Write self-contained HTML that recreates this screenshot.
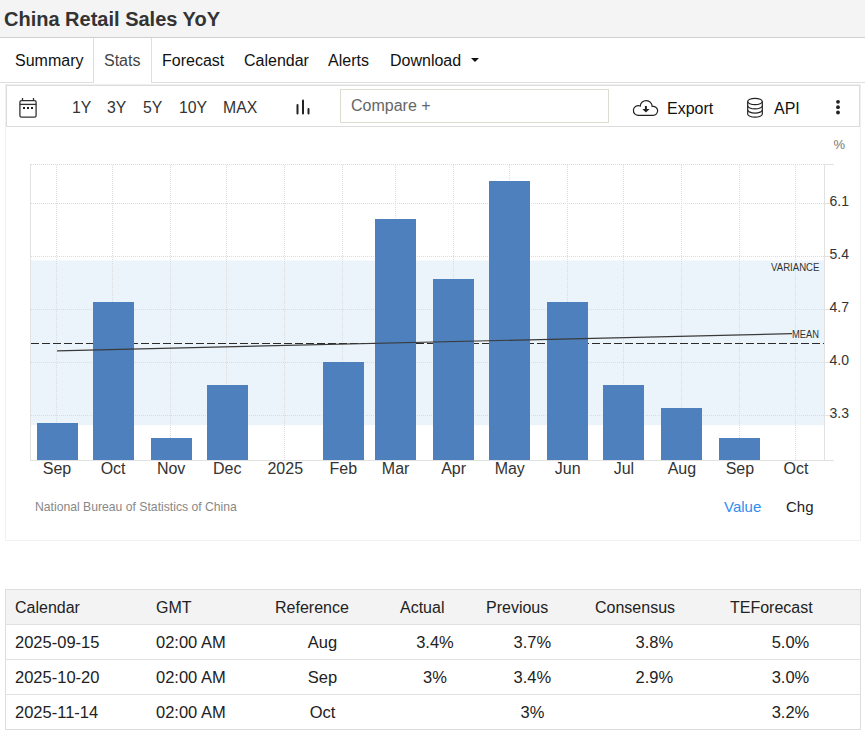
<!DOCTYPE html>
<html><head><meta charset="utf-8">
<style>
*{margin:0;padding:0;box-sizing:border-box}
html,body{width:865px;height:730px;overflow:hidden;background:#fff;font-family:"Liberation Sans",sans-serif;color:#222}
.abs{position:absolute;white-space:nowrap}
#hdr{position:absolute;left:0;top:0;width:865px;height:38px;background:#f4f4f4;border-bottom:1px solid #cfcfcf}
#title{left:4px;top:8px;font-size:20px;font-weight:bold;color:#333}
.tab{font-size:16px;top:52px;color:#111}
.line{position:absolute;background:#dedede}
.tb{font-size:15.8px;top:98.5px;color:#333}
svg text{font-family:"Liberation Sans",sans-serif}
.th{font-size:16px;color:#222}
.td{font-size:16.5px;color:#222}
</style></head><body>
<div id="hdr"></div>
<div class="abs" id="title">China Retail Sales YoY</div>
<!-- tabs -->
<div class="line" style="left:0;top:82px;width:94px;height:1px"></div>
<div class="line" style="left:151px;top:82px;width:714px;height:1px"></div>
<div class="line" style="left:93px;top:38px;width:1px;height:45px"></div>
<div class="line" style="left:151px;top:38px;width:1px;height:45px"></div>
<div class="abs tab" style="left:15px">Summary</div>
<div class="abs tab" style="left:104px;color:#444">Stats</div>
<div class="abs tab" style="left:162px">Forecast</div>
<div class="abs tab" style="left:244px">Calendar</div>
<div class="abs tab" style="left:328px">Alerts</div>
<div class="abs tab" style="left:390px">Download</div>
<div class="abs" style="left:471px;top:58px;width:0;height:0;border-left:4px solid transparent;border-right:4px solid transparent;border-top:4px solid #111"></div>
<!-- chart container -->
<div class="abs" style="left:5px;top:84px;width:856px;height:457px;border:1px solid #f0f0f0"></div>
<div class="abs" style="left:6px;top:85px;width:854px;height:42px;border:1px solid #dcdcdc"></div>
<svg class="abs" style="left:0;top:0" width="865" height="130" viewBox="0 0 865 130">
  <g fill="none" stroke="#333" stroke-width="1.3">
    <rect x="19.9" y="100.6" width="16.2" height="16.5" rx="1.6"/>
    <line x1="19.9" y1="104.4" x2="36.1" y2="104.4"/>
    <line x1="22.5" y1="98" x2="22.5" y2="100.2"/>
    <line x1="33.5" y1="98" x2="33.5" y2="100.2"/>
  </g>
  <g fill="#222"><rect x="23" y="107" width="2" height="2"/><rect x="27" y="107" width="2" height="2"/><rect x="31" y="107" width="2" height="2"/></g>
  <g stroke="#222" stroke-width="2" stroke-linecap="round">
    <line x1="297.5" y1="105" x2="297.5" y2="113.5"/>
    <line x1="303" y1="100.5" x2="303" y2="113.5"/>
    <line x1="308.5" y1="109" x2="308.5" y2="113.5"/>
  </g>
</svg>
<div class="abs tb" style="left:72px">1Y</div>
<div class="abs tb" style="left:107px">3Y</div>
<div class="abs tb" style="left:143px">5Y</div>
<div class="abs tb" style="left:179px">10Y</div>
<div class="abs tb" style="left:223px">MAX</div>
<div class="abs" style="left:340px;top:89px;width:269px;height:34px;border:1px solid #dcdcd0"></div>
<div class="abs" style="left:351px;top:97px;font-size:16px;color:#666">Compare +</div>
<svg class="abs" style="left:0;top:0" width="865" height="130" viewBox="0 0 865 130">
  <path d="M639.3,115.3 H653.1 A4.5,4.5 0 1 0 652.2,106.4 A6,6 0 0 0 640.23,106.0 A4.9,4.9 0 1 0 639.3,115.3 Z" fill="none" stroke="#222" stroke-width="1.2"/>
  <path d="M645.9,106 v4" stroke="#222" stroke-width="2"/>
  <path d="M642.3,109 h7.3 l-3.65,3.5z" fill="#222"/>
  <g fill="none" stroke="#222" stroke-width="1.2">
    <ellipse cx="755" cy="101.5" rx="7.3" ry="3.2"/>
    <path d="M747.7,101.5 V114 M762.3,101.5 V114"/>
    <path d="M747.7,105.7 A7.3,3.2 0 0 0 762.3,105.7"/>
    <path d="M747.7,109.9 A7.3,3.2 0 0 0 762.3,109.9"/>
    <path d="M747.7,114 A7.3,3.2 0 0 0 762.3,114"/>
  </g>
  <g fill="#222"><circle cx="838" cy="101.8" r="1.9"/><circle cx="838" cy="107.2" r="1.9"/><circle cx="838" cy="112.5" r="1.9"/></g>
</svg>
<div class="abs tb" style="left:667px;top:100px;font-size:16px;color:#111">Export</div>
<div class="abs tb" style="left:774px;top:100px;font-size:16px;color:#111">API</div>
<!-- chart -->
<svg class="abs" style="left:0;top:0" width="865" height="545" viewBox="0 0 865 545">
<rect x="31" y="260.5" width="793" height="164.7" fill="#ecf4fb"/>
<line x1="31" y1="164.5" x2="824" y2="164.5" stroke="#dcdcdc" stroke-width="1" stroke-dasharray="1,1"/>
<line x1="31" y1="203.5" x2="824" y2="203.5" stroke="#dcdcdc" stroke-width="1" stroke-dasharray="1,1"/>
<line x1="31" y1="256.5" x2="824" y2="256.5" stroke="#dcdcdc" stroke-width="1" stroke-dasharray="1,1"/>
<line x1="31" y1="309.5" x2="824" y2="309.5" stroke="#dcdcdc" stroke-width="1" stroke-dasharray="1,1"/>
<line x1="31" y1="362.5" x2="824" y2="362.5" stroke="#dcdcdc" stroke-width="1" stroke-dasharray="1,1"/>
<line x1="31" y1="415.5" x2="824" y2="415.5" stroke="#dcdcdc" stroke-width="1" stroke-dasharray="1,1"/>
<line x1="56.5" y1="165" x2="56.5" y2="460" stroke="#dcdcdc" stroke-width="1" stroke-dasharray="1,1"/>
<line x1="112.5" y1="165" x2="112.5" y2="460" stroke="#dcdcdc" stroke-width="1" stroke-dasharray="1,1"/>
<line x1="170.5" y1="165" x2="170.5" y2="460" stroke="#dcdcdc" stroke-width="1" stroke-dasharray="1,1"/>
<line x1="226.5" y1="165" x2="226.5" y2="460" stroke="#dcdcdc" stroke-width="1" stroke-dasharray="1,1"/>
<line x1="284.5" y1="165" x2="284.5" y2="460" stroke="#dcdcdc" stroke-width="1" stroke-dasharray="1,1"/>
<line x1="342.5" y1="165" x2="342.5" y2="460" stroke="#dcdcdc" stroke-width="1" stroke-dasharray="1,1"/>
<line x1="395.5" y1="165" x2="395.5" y2="460" stroke="#dcdcdc" stroke-width="1" stroke-dasharray="1,1"/>
<line x1="453.5" y1="165" x2="453.5" y2="460" stroke="#dcdcdc" stroke-width="1" stroke-dasharray="1,1"/>
<line x1="509.5" y1="165" x2="509.5" y2="460" stroke="#dcdcdc" stroke-width="1" stroke-dasharray="1,1"/>
<line x1="567.5" y1="165" x2="567.5" y2="460" stroke="#dcdcdc" stroke-width="1" stroke-dasharray="1,1"/>
<line x1="623.5" y1="165" x2="623.5" y2="460" stroke="#dcdcdc" stroke-width="1" stroke-dasharray="1,1"/>
<line x1="681.5" y1="165" x2="681.5" y2="460" stroke="#dcdcdc" stroke-width="1" stroke-dasharray="1,1"/>
<line x1="739.5" y1="165" x2="739.5" y2="460" stroke="#dcdcdc" stroke-width="1" stroke-dasharray="1,1"/>
<line x1="795.5" y1="165" x2="795.5" y2="460" stroke="#dcdcdc" stroke-width="1" stroke-dasharray="1,1"/>
<line x1="30.5" y1="164" x2="30.5" y2="461" stroke="#e2e2e2" stroke-width="1"/>
<line x1="824.5" y1="164" x2="824.5" y2="461" stroke="#e2e2e2" stroke-width="1"/>
<line x1="30" y1="460.5" x2="834" y2="460.5" stroke="#e2e2e2" stroke-width="1"/>
<line x1="824" y1="164.5" x2="834" y2="164.5" stroke="#e2e2e2" stroke-width="1"/>
<line x1="824" y1="203.5" x2="834" y2="203.5" stroke="#e2e2e2" stroke-width="1"/>
<line x1="824" y1="256.5" x2="834" y2="256.5" stroke="#e2e2e2" stroke-width="1"/>
<line x1="824" y1="309.5" x2="834" y2="309.5" stroke="#e2e2e2" stroke-width="1"/>
<line x1="824" y1="362.5" x2="834" y2="362.5" stroke="#e2e2e2" stroke-width="1"/>
<line x1="824" y1="415.5" x2="834" y2="415.5" stroke="#e2e2e2" stroke-width="1"/>
<line x1="31" y1="343.5" x2="824" y2="343.5" stroke="#2a2a2a" stroke-width="1" stroke-dasharray="8,3"/>
<rect x="37" y="423" width="41" height="37" fill="#4d80bc"/>
<rect x="93" y="302" width="41" height="158" fill="#4d80bc"/>
<rect x="151" y="438" width="41" height="22" fill="#4d80bc"/>
<rect x="207" y="385" width="41" height="75" fill="#4d80bc"/>
<rect x="323" y="362" width="41" height="98" fill="#4d80bc"/>
<rect x="375" y="219" width="41" height="241" fill="#4d80bc"/>
<rect x="433" y="279" width="41" height="181" fill="#4d80bc"/>
<rect x="489" y="181" width="41" height="279" fill="#4d80bc"/>
<rect x="547" y="302" width="41" height="158" fill="#4d80bc"/>
<rect x="603" y="385" width="41" height="75" fill="#4d80bc"/>
<rect x="661" y="408" width="41" height="52" fill="#4d80bc"/>
<rect x="719" y="438" width="41" height="22" fill="#4d80bc"/>
<line x1="57" y1="350.8" x2="792" y2="333.7" stroke="#3a3a3a" stroke-width="1.2"/>
<text x="771" y="271.4" font-size="10.5" fill="#333" textLength="48.5" lengthAdjust="spacingAndGlyphs">VARIANCE</text>
<text x="792" y="337.6" font-size="10.5" fill="#333" textLength="27" lengthAdjust="spacingAndGlyphs">MEAN</text>
<text x="829.5" y="206.0" font-size="14" fill="#333">6.1</text>
<text x="829.5" y="259.0" font-size="14" fill="#333">5.4</text>
<text x="829.5" y="312.0" font-size="14" fill="#333">4.7</text>
<text x="829.5" y="365.0" font-size="14" fill="#333">4.0</text>
<text x="829.5" y="418.0" font-size="14" fill="#333">3.3</text>
<text x="833.5" y="149" font-size="13" fill="#777">%</text>
<text x="57.00" y="473.7" font-size="16" fill="#333" text-anchor="middle">Sep</text>
<text x="113.13" y="473.7" font-size="16" fill="#333" text-anchor="middle">Oct</text>
<text x="171.12" y="473.7" font-size="16" fill="#333" text-anchor="middle">Nov</text>
<text x="227.25" y="473.7" font-size="16" fill="#333" text-anchor="middle">Dec</text>
<text x="285.25" y="473.7" font-size="16" fill="#333" text-anchor="middle">2025</text>
<text x="343.25" y="473.7" font-size="16" fill="#333" text-anchor="middle">Feb</text>
<text x="395.63" y="473.7" font-size="16" fill="#333" text-anchor="middle">Mar</text>
<text x="453.63" y="473.7" font-size="16" fill="#333" text-anchor="middle">Apr</text>
<text x="509.76" y="473.7" font-size="16" fill="#333" text-anchor="middle">May</text>
<text x="567.76" y="473.7" font-size="16" fill="#333" text-anchor="middle">Jun</text>
<text x="623.88" y="473.7" font-size="16" fill="#333" text-anchor="middle">Jul</text>
<text x="681.88" y="473.7" font-size="16" fill="#333" text-anchor="middle">Aug</text>
<text x="739.88" y="473.7" font-size="16" fill="#333" text-anchor="middle">Sep</text>
<text x="796.01" y="473.7" font-size="16" fill="#333" text-anchor="middle">Oct</text>
</svg>
<div class="abs" style="left:35px;top:500px;font-size:12.2px;color:#888">National Bureau of Statistics of China</div>
<div class="abs" style="left:724px;top:498px;font-size:15px;color:#2f8ded">Value</div>
<div class="abs" style="left:786px;top:498px;font-size:15px;color:#222">Chg</div>
<!-- table -->
<div class="abs" style="left:5px;top:589px;width:856px;height:141px;border:1px solid #dddddd;border-bottom:none"></div>
<div class="abs" style="left:6px;top:590px;width:854px;height:34px;background:#f3f3f3"></div>
<div class="line" style="left:6px;top:624px;width:854px;height:1px;background:#e2e2e2"></div>
<div class="line" style="left:6px;top:659px;width:854px;height:1px;background:#e2e2e2"></div>
<div class="line" style="left:6px;top:694px;width:854px;height:1px;background:#e2e2e2"></div>
<div class="line" style="left:5px;top:729px;width:856px;height:1px;background:#dddddd"></div>
<div class="abs th" style="left:15px;top:599px">Calendar</div>
<div class="abs th" style="left:156px;top:599px">GMT</div>
<div class="abs th" style="left:275px;top:599px">Reference</div>
<div class="abs th" style="left:400px;top:599px">Actual</div>
<div class="abs th" style="left:486px;top:599px">Previous</div>
<div class="abs th" style="left:595px;top:599px">Consensus</div>
<div class="abs th" style="left:730px;top:599px">TEForecast</div>
<div class="abs td" style="left:15px;top:633px">2025-09-15</div>
<div class="abs td" style="left:156px;top:633px">02:00 AM</div>
<div class="abs td" style="left:272.5px;width:100px;text-align:center;top:633px">Aug</div>
<div class="abs td" style="left:385px;width:100px;text-align:center;top:633px">3.4%</div>
<div class="abs td" style="left:482.4px;width:100px;text-align:center;top:633px">3.7%</div>
<div class="abs td" style="left:604.3px;width:100px;text-align:center;top:633px">3.8%</div>
<div class="abs td" style="left:740.5px;width:100px;text-align:center;top:633px">5.0%</div>
<div class="abs td" style="left:15px;top:668px">2025-10-20</div>
<div class="abs td" style="left:156px;top:668px">02:00 AM</div>
<div class="abs td" style="left:272.5px;width:100px;text-align:center;top:668px">Sep</div>
<div class="abs td" style="left:385px;width:100px;text-align:center;top:668px">3%</div>
<div class="abs td" style="left:482.4px;width:100px;text-align:center;top:668px">3.4%</div>
<div class="abs td" style="left:604.3px;width:100px;text-align:center;top:668px">2.9%</div>
<div class="abs td" style="left:740.5px;width:100px;text-align:center;top:668px">3.0%</div>
<div class="abs td" style="left:15px;top:703px">2025-11-14</div>
<div class="abs td" style="left:156px;top:703px">02:00 AM</div>
<div class="abs td" style="left:272.5px;width:100px;text-align:center;top:703px">Oct</div>
<div class="abs td" style="left:482.4px;width:100px;text-align:center;top:703px">3%</div>
<div class="abs td" style="left:740.5px;width:100px;text-align:center;top:703px">3.2%</div>
</body></html>
